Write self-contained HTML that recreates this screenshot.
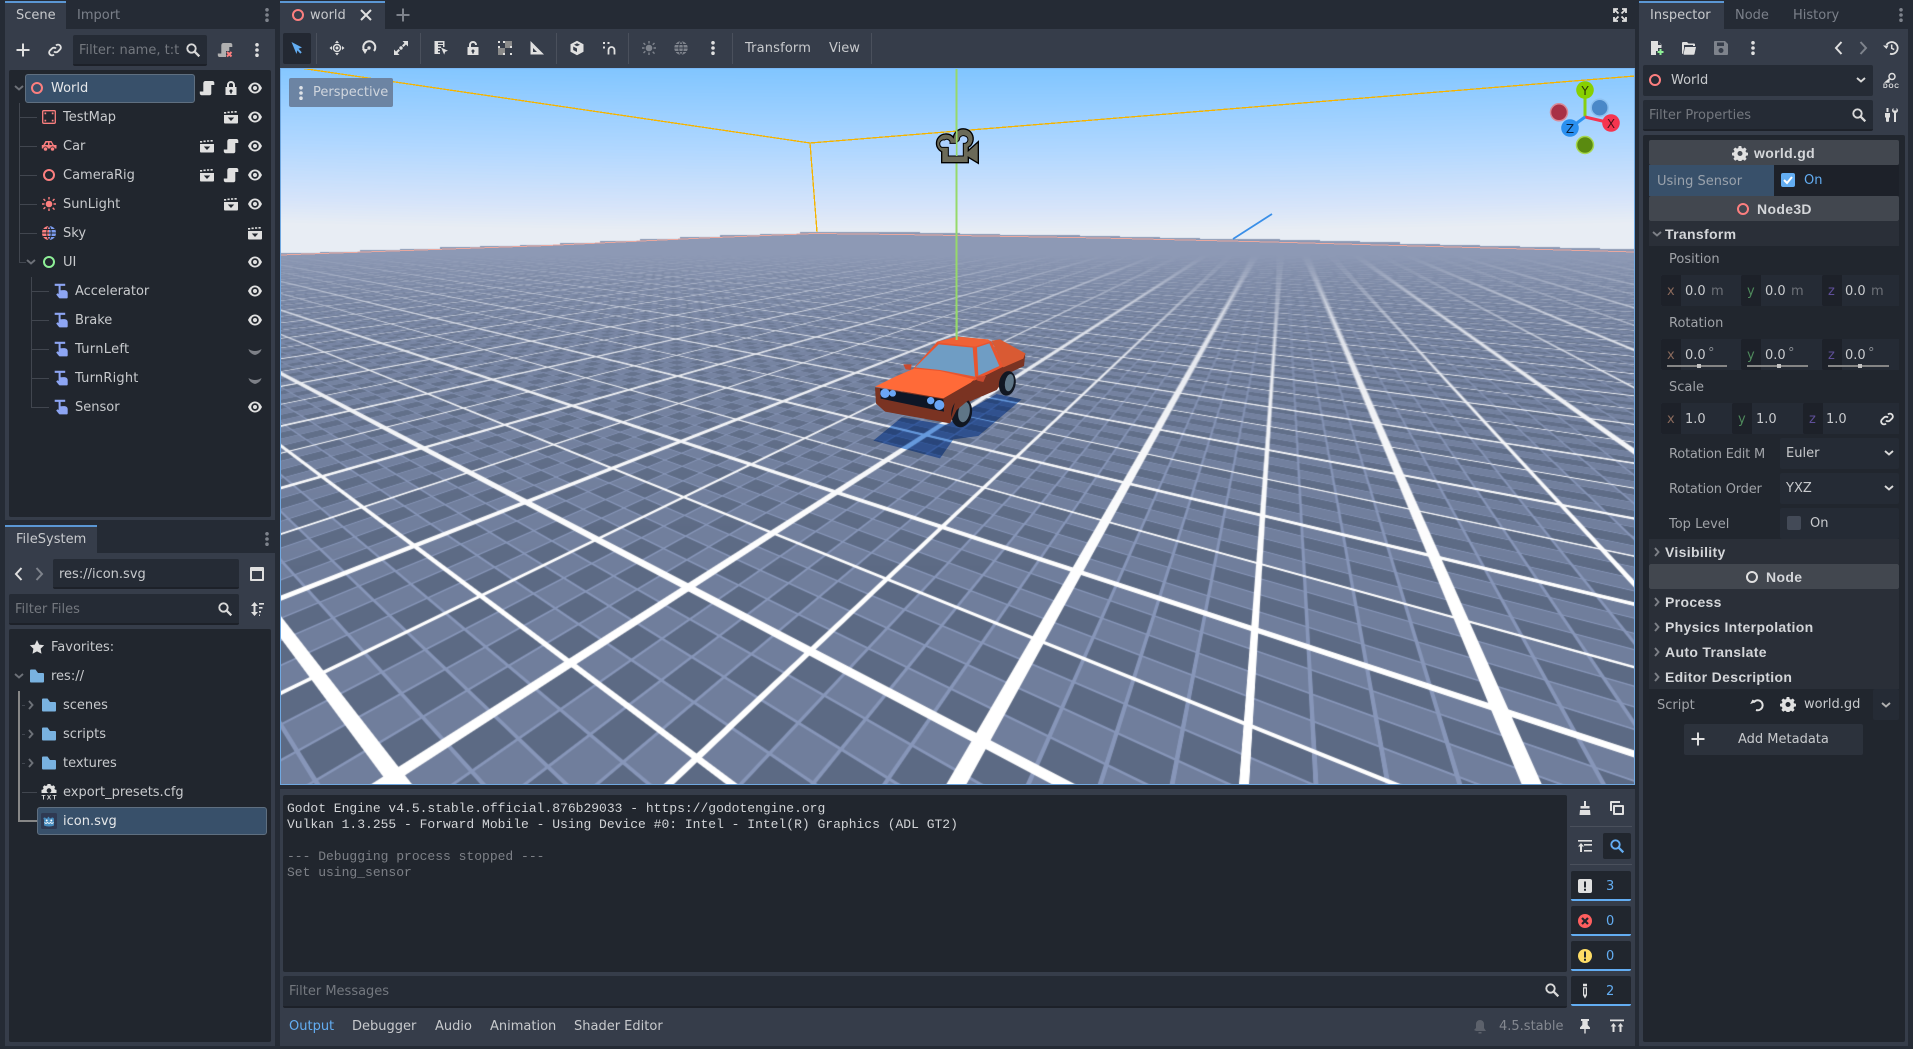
<!DOCTYPE html>
<html><head><meta charset="utf-8"><title>Godot Editor</title>
<style>
html,body{margin:0;padding:0;background:#252b35;width:1913px;height:1049px;overflow:hidden}
#r{position:relative;width:1913px;height:1049px;overflow:hidden;font-family:"DejaVu Sans","Liberation Sans",sans-serif;font-size:13px;color:#c8cacd}
.t{position:absolute;line-height:20px;white-space:nowrap;margin-top:1px}
.b{position:absolute}
.bd{font-family:"Liberation Sans",sans-serif;font-weight:700;font-size:14px;letter-spacing:.33px;color:#d4d6d9}
svg.i{position:absolute;width:16px;height:16px;overflow:visible}
.dim{color:#7b808a}.lab{color:#a0a3a8}.ph{color:#74787f}.blue{color:#63adf2}
.ln{position:absolute;background:#41464f}
.hd{position:absolute;left:1649px;width:250px;background:#42474f;border-radius:2px}
.sec{position:absolute;left:1649px;width:250px;background:#2a2f38}
.ax{position:absolute;width:20px;height:31px;background:#1d2129;border-radius:2px 0 0 2px}
.sl{position:absolute;height:2px;background:#858585}
.sh{position:absolute;width:4px;height:4px;background:#c4c4c4;top:364px}
.mono{font-family:"Liberation Mono",monospace;font-size:13px;line-height:16px;position:absolute;white-space:pre;left:287px}
.fb{position:absolute;left:1571px;width:60px;height:30px;background:#21262e;border-bottom:2px solid #63adf2;border-radius:2px;box-sizing:border-box}
.sep{position:absolute;width:1px;top:33px;height:31px;background:#4a505c}
</style></head><body><div id="r">
<svg width="0" height="0" style="position:absolute">
<defs>
<symbol id="eye" viewBox="0 0 16 16"><path fill-rule="evenodd" fill="#e0e0e0" d="M8 2.500C5 2.500 2.500 4.700 1 8c1.500 3.300 4 5.500 7 5.500s5.500-2.200 7-5.500c-1.500-3.300-4-5.500-7-5.500zm0 1.700a3.800 3.800 0 1 1 0 7.600 3.800 3.800 0 0 1 0-7.600zM8 6a2 2 0 1 0 0 4 2 2 0 0 0 0-4z"/></symbol>
<symbol id="eyeoff" viewBox="0 0 16 16"><path fill="#7d8087" d="M1.500 6c2 1.300 4 2 6.500 2s4.500-.7 6.500-2c-.6 3-3 5-6.500 6-3.500-1-5.900-3-6.500-6z"/></symbol>
<symbol id="clap" viewBox="0 0 16 16"><path fill="#e0e0e0" fill-rule="evenodd" d="M1 6h14v7.500a1 1 0 0 1-1 1H2a1 1 0 0 1-1-1zm3.800 2.500L8 12l3.200-3.500z"/><path fill="#e0e0e0" d="M1 3h2.200v1.600H1zM4.500 2.500h2.200v1.600H4.500zM8 2.200h2.200v1.600H8zM11.500 2h2.200v1.600h-2.200z"/></symbol>
<symbol id="scr" viewBox="0 0 16 16"><path fill="#e0e0e0" d="M6.500 1h7c1 0 1.800.8 1.800 1.800V5h-3v8.500c0 1-.8 1.700-1.700 1.700H2.500c-1 0-1.700-.9-1.700-1.900V11.500h3.500V3.300C4.300 2 5.300 1 6.500 1z"/></symbol>
<symbol id="lock" viewBox="0 0 16 16"><path fill="#e0e0e0" fill-rule="evenodd" d="M4 7V5a4 4 0 0 1 8 0v2h1.500v8h-11V7zm2 0h4V5a2 2 0 0 0-4 0zm2 2.500a1.500 1.500 0 0 0-.8 2.800V13.500h1.600v-1.200A1.500 1.500 0 0 0 8 9.500z"/></symbol>
<symbol id="unlock" viewBox="0 0 16 16"><path fill="#e0e0e0" fill-rule="evenodd" d="M4 7V5a4 4 0 0 1 8 0h-2a2 2 0 0 0-4 0v2h7.500v8h-11V7zm4 2.500a1.500 1.500 0 0 0-.8 2.800V13.500h1.600v-1.200A1.500 1.500 0 0 0 8 9.500z"/></symbol>
<symbol id="ring" viewBox="0 0 16 16"><circle cx="8" cy="8" r="5" fill="none" stroke="currentColor" stroke-width="2"/></symbol>
<symbol id="map" viewBox="0 0 16 16"><rect x="1.700" y="1.700" width="12.600" height="12.600" rx="1" fill="none" stroke="#fc7f7f" stroke-width="1.300"/><path fill="#fc7f7f" d="M3.500 3.500h1.700v1.700H3.500zM10.800 3.500h1.700v1.700h-1.700zM3.500 10.800h1.700v1.700H3.500zM10.800 10.800h1.700v1.700h-1.700z"/></symbol>
<symbol id="car" viewBox="0 0 16 16"><path fill="#fc7f7f" fill-rule="evenodd" d="M4.500 3h6l2.300 4H15.500v3.500H.8V7h1.500zm1 1.500L4 7h3V4.500zm3 0V7h2.800L10 4.500z"/><circle cx="4.500" cy="11" r="2.100" fill="#fc7f7f" stroke="#21262e" stroke-width=".7"/><circle cx="11.500" cy="11" r="2.100" fill="#fc7f7f" stroke="#21262e" stroke-width=".7"/></symbol>
<symbol id="sun" viewBox="0 0 16 16"><circle cx="8" cy="8" r="3.300" fill="currentColor"/><path fill="currentColor" d="M7.300 1h1.400v2.500H7.300zM7.300 12.500h1.400V15H7.300zM1 7.300h2.500v1.400H1zM12.500 7.300H15v1.400h-2.500zM3 2.500l1.800 1.800-1 1L2 3.500zM12.200 11.300l1.800 1.800-1 1-1.800-1.800zM2 12.500l1.800-1.800 1 1L3 13.500zM11.200 4.300L13 2.500l1 1-1.800 1.800z"/></symbol>
<symbol id="sky" viewBox="0 0 16 16"><path d="M8 1a7 7 0 0 0 0 14z" fill="#fc7f7f"/><path d="M8 1a7 7 0 0 1 0 14z" fill="#7c9cf0"/><path d="M1 8h14M8 1C5 4 5 12 8 15M8 1c3 3 3 11 0 14M2 4.500h12M2 11.500h12" stroke="#21262e" stroke-width=".9" fill="none"/></symbol>
<symbol id="globe" viewBox="0 0 16 16"><circle cx="8" cy="8" r="6.700" fill="currentColor"/><path d="M1 8h14M8 1C5 4 5 12 8 15M8 1c3 3 3 11 0 14M2 4.500h12M2 11.500h12" stroke="#363d4a" stroke-width=".9" fill="none"/></symbol>
<symbol id="ctl" viewBox="0 0 16 16"><path fill="#8da5f3" d="M1.700 .8h10.500v2.100H7.600v4.400h1.300c3-.4 5.800 0 5.800 3v3.800a1.300 1.300 0 0 1-1.300 1.300H7a1.500 1.500 0 0 1-1.200-.6L3.200 11.500l1.300-1.200 1.100.7V2.900H1.700z"/></symbol>
<symbol id="mag" viewBox="0 0 16 16"><circle cx="6.500" cy="6.500" r="4.200" fill="none" stroke="currentColor" stroke-width="1.900"/><path d="M9.700 9.700l4.600 4.600" stroke="currentColor" stroke-width="2.300" fill="none"/></symbol>
<symbol id="dots" viewBox="0 0 16 16"><circle cx="8" cy="2.800" r="1.800" fill="currentColor"/><circle cx="8" cy="8" r="1.800" fill="currentColor"/><circle cx="8" cy="13.200" r="1.800" fill="currentColor"/></symbol>
<symbol id="chd" viewBox="0 0 16 16"><path d="M4 6l4 3.500L12 6" fill="none" stroke="currentColor" stroke-width="1.900"/></symbol>
<symbol id="chr" viewBox="0 0 16 16"><path d="M6 4l3.500 4L6 12" fill="none" stroke="currentColor" stroke-width="1.900"/></symbol>
<symbol id="bl" viewBox="0 0 16 16"><path d="M10.500 2L5 8l5.500 6" fill="none" stroke="currentColor" stroke-width="2"/></symbol>
<symbol id="br" viewBox="0 0 16 16"><path d="M5.500 2L11 8l-5.500 6" fill="none" stroke="currentColor" stroke-width="2"/></symbol>
<symbol id="plus" viewBox="0 0 16 16"><path d="M8 1.500v13M1.500 8h13" stroke="currentColor" stroke-width="2" fill="none"/></symbol>
<symbol id="link" viewBox="0 0 16 16"><path d="M9 3.500a2.800 2.800 0 0 1 4 4l-2 2a2.800 2.800 0 0 1-4 0M7 12.500a2.800 2.800 0 0 1-4-4l2-2a2.800 2.800 0 0 1 4 0" fill="none" stroke="currentColor" stroke-width="1.900"/></symbol>
<symbol id="scrx" viewBox="0 0 16 16"><path fill="#b0b0b0" d="M6.500 1h7c1 0 1.800.8 1.800 1.800V5h-3v4H9v6H2.500c-1 0-1.700-.9-1.700-1.900V11.500h3.500V3.300C4.300 2 5.300 1 6.500 1z"/><path d="M10 10l4.500 4.500M14.500 10L10 14.500" stroke="#fc7f7f" stroke-width="2" fill="none"/></symbol>
<symbol id="folder" viewBox="0 0 16 16"><path fill="#79b2e0" d="M1 2.500a1 1 0 0 1 1-1h4.500L9 5h5a1 1 0 0 1 1 1v7.500a1 1 0 0 1-1 1H2a1 1 0 0 1-1-1z"/></symbol>
<symbol id="star" viewBox="0 0 16 16"><path fill="#e0e0e0" d="M8 1l2.200 4.600 5 .7-3.600 3.500.9 5L8 12.400l-4.500 2.400.9-5L.8 6.300l5-.7z"/></symbol>
<symbol id="gear" viewBox="0 0 16 16"><path fill="#e0e0e0" fill-rule="evenodd" d="M6.700 1h2.600l.4 2 1.300.6 1.800-1.100 1.800 1.800-1.100 1.800.6 1.300 1.900.4v2.600l-1.900.4-.6 1.300 1.100 1.800-1.800 1.800-1.800-1.100-1.300.6-.4 1.900H6.700l-.4-1.900-1.300-.6-1.800 1.100-1.800-1.800 1.100-1.800-.6-1.300-1.900-.4V7.800l1.900-.4.6-1.300-1.100-1.800 1.800-1.800 1.800 1.100 1.300-.6zM8 6a2.500 2.500 0 1 0 0 5 2.500 2.500 0 0 0 0-5z"/></symbol>
<symbol id="cfg" viewBox="0 0 16 16"><path fill="#e0e0e0" d="M6.500 0h3l.3 1.400 1.400.6 1.200-.8 1.800 1.800-.8 1.300.5 1.200 1.600.4V9H.5V5.900L2 5.500l.6-1.200-.8-1.300L3.600 1.200l1.200.8 1.400-.6zM8 4.300A2.300 2.300 0 1 0 8 9a2.300 2.300 0 0 0 0-4.700z" fill-rule="evenodd"/><text x="8" y="15.500" font-family="Liberation Sans" font-weight="700" font-size="6.500" text-anchor="middle" fill="#e0e0e0" textLength="15">TXT</text></symbol>
<symbol id="godot" viewBox="0 0 16 16"><rect width="16" height="16" rx="1.500" fill="#2f3952"/><path fill="#478cbf" d="M3 7l-.7-2 1.700-.6 1 1h1.500l.4-1.500h1.200l.4 1.500h1.500l1-1 1.700.6L13 7v5.500c-3 1.300-7 1.300-10 0z"/><path d="M3.500 9.500l1.500 1 1.500-1 1.500 1 1.500-1 1.500 1 1.500-1" stroke="#fff" stroke-width=".9" fill="none"/><circle cx="5.700" cy="7.500" r="1" fill="#fff"/><circle cx="10.300" cy="7.500" r="1" fill="#fff"/></symbol>
<symbol id="file" viewBox="0 0 16 16"><path fill="#e0e0e0" d="M2 1h7l3.500 3.500V8H9v3H7v4H2zM9 1v4h3.500z"/><path d="M11.500 9v6M8.500 12h6" stroke="#8eef97" stroke-width="2"/></symbol>
<symbol id="open" viewBox="0 0 16 16"><path fill="#e0e0e0" fill-rule="evenodd" d="M1 3a1 1 0 0 1 1-1h4l1.500 1.500H13a1 1 0 0 1 1 1V6h-2V5H3v3.500L2 14a1 1 0 0 1-1-1z"/><path fill="#e0e0e0" d="M4 7h11l-1.500 7a1 1 0 0 1-1 .7H3l-.5-.5z"/></symbol>
<symbol id="save" viewBox="0 0 16 16"><path fill-rule="evenodd" d="M2 1h10l3 3v10a1 1 0 0 1-1 1H2a1 1 0 0 1-1-1V2a1 1 0 0 1 1-1zm2 1.500V6h7V2.500zM8 8a2.500 2.500 0 1 0 0 5 2.500 2.500 0 0 0 0-5z" fill="currentColor"/></symbol>
<symbol id="hist" viewBox="0 0 16 16"><path d="M3.500 5A6 6 0 1 1 7 13.800" fill="none" stroke="#e0e0e0" stroke-width="1.800"/><path d="M0 5.500h5.500L3.500 9z" fill="#e0e0e0"/><path d="M8.700 4.500v3.800l2.500 1.300" fill="none" stroke="#e0e0e0" stroke-width="1.500"/></symbol>
<symbol id="doc" viewBox="0 0 16 16"><circle cx="9" cy="4.500" r="3" fill="none" stroke="#e0e0e0" stroke-width="1.500"/><path d="M6.800 6.700L3 10h3.500" stroke="#e0e0e0" stroke-width="1.600" fill="#e0e0e0"/><text x="8" y="15.800" font-family="Liberation Sans" font-weight="700" font-size="6.500" text-anchor="middle" fill="#e0e0e0" textLength="16">DOC</text></symbol>
<symbol id="tools" viewBox="0 0 16 16"><path fill="#e0e0e0" d="M2 6h5v4l-1 1v3.500L4.500 15 3 14.500V11L2 10zM3.500 1h2v4h-2zM10.500 1c-1 .5-1.500 1.500-1.500 2.500S10 5.500 11 6v9h2V6c1-.5 2-1.500 2-2.500S14.500 1.500 13.500 1v2.500h-3z"/></symbol>
<symbol id="sort" viewBox="0 0 16 16"><path fill="#e0e0e0" d="M5.500 1L9 5H6.500v6H9l-3.500 4L2 11h2.500V5H2zM10 2h5v1.600h-5zM10 6h3.500v1.600H10zM10 10h2v1.600h-2zM10 13.500h1v1.500h-1z"/></symbol>
<symbol id="win" viewBox="0 0 16 16"><path fill="#e0e0e0" fill-rule="evenodd" d="M2 1h12a1 1 0 0 1 1 1v12a1 1 0 0 1-1 1H2a1 1 0 0 1-1-1V2a1 1 0 0 1 1-1zm1 4v8h10V5z"/></symbol>
<symbol id="reload" viewBox="0 0 16 16"><path d="M4.500 5.500A5 5 0 1 1 7 13" fill="none" stroke="#e0e0e0" stroke-width="2"/><path d="M.5 6h6.500L4.500 2.500z" fill="#e0e0e0" transform="rotate(-20 4 5)"/></symbol>
<symbol id="full" viewBox="0 0 16 16"><path d="M2 6V2h4M10 2h4v4M14 10v4h-4M6 14H2v-4M3 3l3.500 3.500M13 3L9.500 6.500M13 13L9.500 9.500M3 13l3.500-3.500" fill="none" stroke="#e0e0e0" stroke-width="1.800"/></symbol>
<symbol id="clean" viewBox="0 0 16 16"><path fill="#e0e0e0" d="M7 1h2v5h3.500v2.500h-9V6H7zM3 10h10l.5 5H2.500z"/></symbol>
<symbol id="copy" viewBox="0 0 16 16"><path fill="#e0e0e0" fill-rule="evenodd" d="M2 1h9v2H3v8H1V2a1 1 0 0 1 1-1zm3 4h9a1 1 0 0 1 1 1v8a1 1 0 0 1-1 1H5a1 1 0 0 1-1-1V6a1 1 0 0 1 1-1zm1 2v6h7V7z"/></symbol>
<symbol id="lines" viewBox="0 0 16 16"><path fill="#e0e0e0" d="M1 2h14v1.600H1zM7 6h8v1.600H7zM7 12h8v1.600H7zM4 5l3 3.500H5V14H3V8.500H1z"/></symbol>
<symbol id="msg" viewBox="0 0 16 16"><rect x="1" y="1" width="14" height="14" rx="2" fill="#e0e0e0"/><path d="M7 3.500h2v6H7zM7 10.800h2v2H7z" fill="#21262e"/></symbol>
<symbol id="err" viewBox="0 0 16 16"><circle cx="8" cy="8" r="7" fill="#ff5f5f"/><path d="M5 5l6 6M11 5l-6 6" stroke="#21262e" stroke-width="2.200"/></symbol>
<symbol id="warn" viewBox="0 0 16 16"><circle cx="8" cy="8" r="7" fill="#ffdd65"/><path d="M7 3.500h2v6H7zM7 10.800h2v2H7z" fill="#21262e"/></symbol>
<symbol id="pen" viewBox="0 0 16 16"><path fill="#e0e0e0" fill-rule="evenodd" d="M6 .8h4v2.500H6zM6 4.200h4v8L8 15.500 6 12.200zM7.200 5.500v6h1.600v-6z"/></symbol>
<symbol id="pin" viewBox="0 0 16 16"><path fill="#e0e0e0" d="M4 1h8v2h-1.300v4L13 9.500V11H3V9.500L5.300 7V3H4zM7.300 11h1.400v4.500H7.300z"/></symbol>
<symbol id="ups" viewBox="0 0 16 16"><path fill="#e0e0e0" d="M1 1.500h14v1.800H1zM4.500 5L7.300 8.500H5.500V14h-2V8.500H1.700zM11.500 5l2.800 3.500h-1.800V14h-2V8.500H8.700z"/></symbol>
<symbol id="arrow" viewBox="0 0 16 16"><path d="M2.500 2L13 7.500 8.700 9l-1.200 5z" fill="currentColor"/><path d="M8.500 9l3.500 4" stroke="currentColor" stroke-width="2"/></symbol>
<symbol id="move" viewBox="0 0 16 16"><path fill="#e0e0e0" d="M8 .5L10 3H6zM8 15.500L6 13h4zM.5 8L3 6v4zM15.500 8L13 10V6z"/><circle cx="8" cy="8" r="3.500" fill="none" stroke="#e0e0e0" stroke-width="1.500"/><circle cx="8" cy="8" r="1.500" fill="#e0e0e0"/></symbol>
<symbol id="rot" viewBox="0 0 16 16"><path d="M4 11.500A6 6 0 1 1 13 11" fill="none" stroke="#e0e0e0" stroke-width="2"/><path d="M1 9h6l-3 5z" fill="#e0e0e0"/><circle cx="8" cy="8" r="1.700" fill="#e0e0e0"/></symbol>
<symbol id="scl" viewBox="0 0 16 16"><path fill="#e0e0e0" d="M9.500 1H15v5.500l-2-2-2.500 2.500L9 5.500 11.500 3zM6.500 15H1V9.500l2 2L5.500 9 7 10.500 4.500 13z"/><circle cx="8" cy="8" r="1.700" fill="#e0e0e0"/></symbol>
<symbol id="lst" viewBox="0 0 16 16"><path fill="#e0e0e0" fill-rule="evenodd" d="M1.500 1h10v6H10V5H5v1.500h3V8H5v1.500h2V11H5v1.500h2V14H1.500zM5 2.500V4h5V2.500z"/><path d="M8 7.500l7 3.300-2.800 1-1 2.800z" fill="#e0e0e0"/></symbol>
<symbol id="grid" viewBox="0 0 16 16"><path fill="#8a8a8a" d="M1 8h7v7H1zM8 1h7v7H8z"/><path fill="#e0e0e0" d="M1 1h2v2H1zM6 1h2v2H6zM13 6h2v2h-2zM13 13h2v2h-2zM6 13h2v2H6zM1 6h2v2H1z"/></symbol>
<symbol id="rul" viewBox="0 0 16 16"><path fill="#e0e0e0" fill-rule="evenodd" d="M1.500 1L15 14.500H1.500zM4 8v4h4z"/></symbol>
<symbol id="cube" viewBox="0 0 16 16"><path fill="#e0e0e0" fill-rule="evenodd" d="M8 .8l6.500 3.400v7.600L8 15.200l-6.500-3.400V4.200zM8 8.500l-3.800-2V10L8 12zM8 3.300L5 4.800 8 6.300l3-1.500z"/></symbol>
<symbol id="mgn" viewBox="0 0 16 16"><path d="M7.500 14.500V10a3 3 0 0 1 6 0v4.500" fill="none" stroke="#e0e0e0" stroke-width="1.800"/><path fill="#e0e0e0" d="M2 2h2v2H2zM2 6.500h2v2H2zM6.500 2h2v2h-2z"/></symbol>
</defs></svg>

<!-- LEFT TOP DOCK -->
<div class="b" style="left:5px;top:0;width:270px;height:29px;background:#252b35"></div>
<div class="b" style="left:5px;top:1px;width:61px;height:28px;background:#363d4a;border-top:2px solid #5b97d4;box-sizing:border-box"></div>
<div class="t" style="left:16px;top:5px">Scene</div>
<div class="t dim" style="left:77px;top:5px">Import</div>
<svg class="i" style="left:259px;top:7px;color:#7e838c"><use href="#dots"/></svg>
<div class="b" style="left:5px;top:29px;width:270px;height:491px;background:#363d4a"></div>
<svg class="i" style="left:15px;top:42px;color:#e0e0e0"><use href="#plus"/></svg>
<svg class="i" style="left:47px;top:42px;color:#e0e0e0"><use href="#link"/></svg>
<div class="b" style="left:73px;top:35px;width:134px;height:31px;background:#252b35;border-bottom:2px solid #1d2129;box-sizing:border-box;border-radius:2px"></div>
<div class="t ph" style="left:79px;top:40px">Filter: name, t:t</div>
<svg class="i" style="left:185px;top:42px;color:#d8d8d8"><use href="#mag"/></svg>
<svg class="i" style="left:217px;top:42px"><use href="#scrx"/></svg>
<svg class="i" style="left:249px;top:42px;color:#e0e0e0"><use href="#dots"/></svg>
<div class="b" style="left:9px;top:70px;width:262px;height:447px;background:#21262e;border-radius:2px"></div>
<div class="b" style="left:25px;top:74px;width:170px;height:29px;background:#38506a;border:1px solid #5f6f80;box-sizing:border-box;border-radius:3px"></div>
<!-- tree lines -->
<div class="ln" style="left:19px;top:103px;width:1px;height:160px"></div>
<div class="ln" style="left:20px;top:117px;width:17px;height:1px"></div>
<div class="ln" style="left:20px;top:146px;width:17px;height:1px"></div>
<div class="ln" style="left:20px;top:175px;width:17px;height:1px"></div>
<div class="ln" style="left:20px;top:204px;width:17px;height:1px"></div>
<div class="ln" style="left:20px;top:233px;width:17px;height:1px"></div>
<div class="ln" style="left:20px;top:262px;width:6px;height:1px"></div>
<div class="ln" style="left:31px;top:277px;width:1px;height:131px"></div>
<div class="ln" style="left:32px;top:291px;width:17px;height:1px"></div>
<div class="ln" style="left:32px;top:320px;width:17px;height:1px"></div>
<div class="ln" style="left:32px;top:349px;width:17px;height:1px"></div>
<div class="ln" style="left:32px;top:378px;width:17px;height:1px"></div>
<div class="ln" style="left:32px;top:407px;width:17px;height:1px"></div>
<svg class="i" style="left:11px;top:80px;color:#6d7178"><use href="#chd"/></svg>
<svg class="i" style="left:23px;top:254px;color:#6d7178"><use href="#chd"/></svg>
<svg class="i" style="left:29px;top:80px;color:#fc7f7f"><use href="#ring"/></svg>
<div class="t" style="left:51px;top:78px;color:#e6e8ea">World</div>
<svg class="i" style="left:199px;top:80px"><use href="#scr"/></svg>
<svg class="i" style="left:223px;top:80px"><use href="#lock"/></svg>
<svg class="i" style="left:247px;top:80px"><use href="#eye"/></svg>
<svg class="i" style="left:41px;top:109px"><use href="#map"/></svg>
<div class="t" style="left:63px;top:107px">TestMap</div>
<svg class="i" style="left:223px;top:109px"><use href="#clap"/></svg>
<svg class="i" style="left:247px;top:109px"><use href="#eye"/></svg>
<svg class="i" style="left:41px;top:138px"><use href="#car"/></svg>
<div class="t" style="left:63px;top:136px">Car</div>
<svg class="i" style="left:199px;top:138px"><use href="#clap"/></svg>
<svg class="i" style="left:223px;top:138px"><use href="#scr"/></svg>
<svg class="i" style="left:247px;top:138px"><use href="#eye"/></svg>
<svg class="i" style="left:41px;top:167px;color:#fc7f7f"><use href="#ring"/></svg>
<div class="t" style="left:63px;top:165px">CameraRig</div>
<svg class="i" style="left:199px;top:167px"><use href="#clap"/></svg>
<svg class="i" style="left:223px;top:167px"><use href="#scr"/></svg>
<svg class="i" style="left:247px;top:167px"><use href="#eye"/></svg>
<svg class="i" style="left:41px;top:196px;color:#fc7f7f"><use href="#sun"/></svg>
<div class="t" style="left:63px;top:194px">SunLight</div>
<svg class="i" style="left:223px;top:196px"><use href="#clap"/></svg>
<svg class="i" style="left:247px;top:196px"><use href="#eye"/></svg>
<svg class="i" style="left:41px;top:225px"><use href="#sky"/></svg>
<div class="t" style="left:63px;top:223px">Sky</div>
<svg class="i" style="left:247px;top:225px"><use href="#clap"/></svg>
<svg class="i" style="left:41px;top:254px;color:#8eef97"><use href="#ring"/></svg>
<div class="t" style="left:63px;top:252px">UI</div>
<svg class="i" style="left:247px;top:254px"><use href="#eye"/></svg>
<svg class="i" style="left:53px;top:283px"><use href="#ctl"/></svg>
<div class="t" style="left:75px;top:281px">Accelerator</div>
<svg class="i" style="left:247px;top:283px"><use href="#eye"/></svg>
<svg class="i" style="left:53px;top:312px"><use href="#ctl"/></svg>
<div class="t" style="left:75px;top:310px">Brake</div>
<svg class="i" style="left:247px;top:312px"><use href="#eye"/></svg>
<svg class="i" style="left:53px;top:341px"><use href="#ctl"/></svg>
<div class="t" style="left:75px;top:339px;letter-spacing:.3px">TurnLeft</div>
<svg class="i" style="left:247px;top:343px"><use href="#eyeoff"/></svg>
<svg class="i" style="left:53px;top:370px"><use href="#ctl"/></svg>
<div class="t" style="left:75px;top:368px;letter-spacing:.2px">TurnRight</div>
<svg class="i" style="left:247px;top:372px"><use href="#eyeoff"/></svg>
<svg class="i" style="left:53px;top:399px"><use href="#ctl"/></svg>
<div class="t" style="left:75px;top:397px">Sensor</div>
<svg class="i" style="left:247px;top:399px"><use href="#eye"/></svg>

<!-- FILESYSTEM -->
<div class="b" style="left:5px;top:525px;width:270px;height:28px;background:#252b35"></div>
<div class="b" style="left:5px;top:525px;width:92px;height:28px;background:#363d4a;border-top:2px solid #5b97d4;box-sizing:border-box"></div>
<div class="t" style="left:16px;top:529px">FileSystem</div>
<svg class="i" style="left:259px;top:531px;color:#7e838c"><use href="#dots"/></svg>
<div class="b" style="left:5px;top:553px;width:270px;height:493px;background:#363d4a"></div>
<svg class="i" style="left:11px;top:566px;color:#e0e0e0"><use href="#bl"/></svg>
<svg class="i" style="left:31px;top:566px;color:#7e838c"><use href="#br"/></svg>
<div class="b" style="left:53px;top:559px;width:186px;height:30px;background:#252b35;border-bottom:2px solid #1d2129;box-sizing:border-box;border-radius:2px"></div>
<div class="t" style="left:59px;top:564px">res://icon.svg</div>
<svg class="i" style="left:249px;top:566px"><use href="#win"/></svg>
<div class="b" style="left:9px;top:594px;width:230px;height:31px;background:#252b35;border-bottom:2px solid #1d2129;box-sizing:border-box;border-radius:2px"></div>
<div class="t ph" style="left:15px;top:599px">Filter Files</div>
<svg class="i" style="left:217px;top:601px;color:#d8d8d8"><use href="#mag"/></svg>
<svg class="i" style="left:249px;top:601px"><use href="#sort"/></svg>
<div class="b" style="left:9px;top:629px;width:262px;height:413px;background:#21262e;border-radius:2px"></div>
<svg class="i" style="left:29px;top:639px"><use href="#star"/></svg>
<div class="t" style="left:51px;top:637px">Favorites:</div>
<svg class="i" style="left:11px;top:668px;color:#6d7178"><use href="#chd"/></svg>
<svg class="i" style="left:29px;top:668px"><use href="#folder"/></svg>
<div class="t" style="left:51px;top:666px">res://</div>
<div class="b" style="left:18px;top:691px;width:2px;height:131px;background:#878787"></div>
<div class="b" style="left:18px;top:820px;width:19px;height:2px;background:#878787"></div>
<div class="ln" style="left:22px;top:705px;width:3px;height:1px"></div>
<div class="ln" style="left:22px;top:734px;width:3px;height:1px"></div>
<div class="ln" style="left:22px;top:763px;width:3px;height:1px"></div>
<div class="ln" style="left:22px;top:792px;width:15px;height:1px"></div>
<svg class="i" style="left:23px;top:697px;color:#6d7178"><use href="#chr"/></svg>
<svg class="i" style="left:23px;top:726px;color:#6d7178"><use href="#chr"/></svg>
<svg class="i" style="left:23px;top:755px;color:#6d7178"><use href="#chr"/></svg>
<svg class="i" style="left:41px;top:697px"><use href="#folder"/></svg>
<div class="t" style="left:63px;top:695px">scenes</div>
<svg class="i" style="left:41px;top:726px"><use href="#folder"/></svg>
<div class="t" style="left:63px;top:724px">scripts</div>
<svg class="i" style="left:41px;top:755px"><use href="#folder"/></svg>
<div class="t" style="left:63px;top:753px">textures</div>
<svg class="i" style="left:41px;top:784px"><use href="#cfg"/></svg>
<div class="t" style="left:63px;top:782px">export_presets.cfg</div>
<div class="b" style="left:37px;top:807px;width:230px;height:28px;background:#38506a;border:1px solid #5f6f80;box-sizing:border-box;border-radius:3px"></div>
<svg class="i" style="left:41px;top:813px"><use href="#godot"/></svg>
<div class="t" style="left:63px;top:811px;color:#e6e8ea">icon.svg</div>

<!-- CENTER TOP -->
<div class="b" style="left:280px;top:0;width:1355px;height:29px;background:#252b35"></div>
<div class="b" style="left:280px;top:1px;width:105px;height:28px;background:#363d4a;border-top:2px solid #5b97d4;box-sizing:border-box"></div>
<svg class="i" style="left:290px;top:7px;color:#fc7f7f"><use href="#ring"/></svg>
<div class="t" style="left:310px;top:5px">world</div>
<svg class="i" style="left:358px;top:7px"><path d="M3 3l10 10M13 3L3 13" stroke="#e0e0e0" stroke-width="2" fill="none"/></svg>
<svg class="i" style="left:395px;top:7px;color:#7e838c"><use href="#plus"/></svg>
<svg class="i" style="left:1612px;top:7px"><use href="#full"/></svg>
<div class="b" style="left:280px;top:29px;width:1355px;height:39px;background:#363d4a"></div>
<div class="b" style="left:283px;top:33px;width:28px;height:31px;background:#232832;border-radius:2px"></div>
<svg class="i" style="left:289px;top:40px;color:#63adf2"><use href="#arrow"/></svg>
<div class="sep" style="left:316px"></div><div class="sep" style="left:420px"></div><div class="sep" style="left:556px"></div><div class="sep" style="left:628px"></div><div class="sep" style="left:732px"></div><div class="sep" style="left:871px"></div>
<svg class="i" style="left:329px;top:40px"><use href="#move"/></svg>
<svg class="i" style="left:361px;top:40px"><use href="#rot"/></svg>
<svg class="i" style="left:393px;top:40px"><use href="#scl"/></svg>
<svg class="i" style="left:433px;top:40px"><use href="#lst"/></svg>
<svg class="i" style="left:465px;top:40px"><use href="#unlock"/></svg>
<svg class="i" style="left:497px;top:40px"><use href="#grid"/></svg>
<svg class="i" style="left:529px;top:40px"><use href="#rul"/></svg>
<svg class="i" style="left:569px;top:40px"><use href="#cube"/></svg>
<svg class="i" style="left:601px;top:40px"><use href="#mgn"/></svg>
<svg class="i" style="left:641px;top:40px;color:#7e838c"><use href="#sun"/></svg>
<svg class="i" style="left:673px;top:40px;color:#7e838c"><use href="#globe"/></svg>
<svg class="i" style="left:705px;top:40px;color:#e0e0e0"><use href="#dots"/></svg>
<div class="t" style="left:745px;top:38px;letter-spacing:.15px">Transform</div>
<div class="t" style="left:829px;top:38px">View</div>

<!-- VIEWPORT -->
<div class="b" style="left:280px;top:68px;width:1355px;height:717px;background:#7080a0;overflow:hidden">
<canvas id="vp" width="1355" height="717" style="position:absolute;left:0;top:0"></canvas>
<svg style="position:absolute;left:560px;top:242px;width:220px;height:160px;mix-blend-mode:multiply" viewBox="0 0 660 480"><polygon fill="#6aa0e4" points="100,392 185,322 320,345 385,300 470,252 545,268 415,378 340,388 300,445"/></svg>
<svg style="position:absolute;left:0;top:0;width:1355px;height:717px" viewBox="280 68 1355 717">
<polyline fill="none" stroke="#e8a8a0" stroke-width="1" shape-rendering="crispEdges" points="280,255 548,245.500 704,238 815,233.500 900,234.500 1100,238 1270,242 1635,252"/>
<polyline fill="none" stroke="#f5b400" stroke-width="1.300" shape-rendering="crispEdges" points="300,68 810,143 1635,76"/>
<line x1="810" y1="143" x2="817" y2="232" stroke="#f5b400" stroke-width="1.300" shape-rendering="crispEdges"/>
<line x1="1233" y1="239" x2="1272" y2="214" stroke="#3a8fe8" stroke-width="1.800"/>
<line x1="956.500" y1="68" x2="956.500" y2="340" stroke="#96d96a" stroke-width="2"/>
<g transform="translate(930,120) scale(.3333) translate(-90,-180)">
<path d="M125 305 V275 A28 28 0 0 1 135 222 A28 28 0 0 1 160 232 A30 30 0 0 1 216 222 A30 30 0 0 1 205 262 V272 L235 245 V310 L205 292 V308 H125z" fill="#6b6a58" stroke="#000" stroke-width="4"/>
<path d="M145 288 V262 L125 262 A12 12 0 0 1 134 240 A10 10 0 0 1 150 250 L168 250 L178 240 A12 12 0 0 1 195 228 A10 10 0 0 1 190 250 V288z" fill="#acd0fe" stroke="#000" stroke-width="3"/>
<line x1="170" y1="200" x2="170" y2="288" stroke="#96d96a" stroke-width="5"/>
</g>
<circle cx="1559" cy="112.300" r="8.500" fill="#a83146" stroke="#d98a98" stroke-width="1.500"/>
<circle cx="1599.700" cy="107.700" r="8.500" fill="#4a88c8" stroke="#8cc0f0" stroke-width="1.500"/>
<circle cx="1585" cy="145" r="8.500" fill="#5a8a10" stroke="#a6d850" stroke-width="1.500"/>
<line x1="1585" y1="117" x2="1585" y2="90" stroke="#88cf10" stroke-width="3"/>
<line x1="1585" y1="117" x2="1611" y2="123" stroke="#f5344f" stroke-width="3"/>
<line x1="1585" y1="117" x2="1570" y2="128" stroke="#2a90f0" stroke-width="3"/>
<circle cx="1585" cy="90" r="8.800" fill="#88d000"/>
<circle cx="1611" cy="123" r="8.800" fill="#f5344f"/>
<circle cx="1570" cy="128" r="8.800" fill="#2a90f0"/>
<text x="1585" y="95" font-family="DejaVu Sans" font-size="12" text-anchor="middle" fill="#27330a">Y</text>
<text x="1611" y="128" font-family="DejaVu Sans" font-size="12" text-anchor="middle" fill="#4a0f18">X</text>
<text x="1570" y="133" font-family="DejaVu Sans" font-size="12" text-anchor="middle" fill="#08223f">Z</text>
</svg>
<svg style="position:absolute;left:560px;top:242px;width:220px;height:160px" viewBox="0 0 660 480">
<polygon fill="#7a3322" points="105,232 108,280 135,305 330,340 345,300 395,272 470,240 505,190 552,168 556,130 400,210 310,262"/>
<polygon fill="#d95a33" points="455,92 480,88 556,130 550,146 490,172"/>
<polygon fill="#e8552f" points="218,178 292,95 352,80 445,90 455,95 490,170 415,207 402,212 300,185"/>
<polygon fill="#f06236" points="292,97 350,80 445,88 450,95 405,110"/>
<polygon fill="#6f9dc4" points="226,172 296,103 398,113 405,200 300,180"/>
<polygon fill="#6f9dc4" points="411,112 448,100 478,168 415,197"/>
<polygon fill="#ff6a38" points="105,230 170,198 222,176 300,183 403,208 392,218 310,265"/>
<polygon fill="#0e1626" points="120,236 310,268 312,305 122,266"/>
<polygon fill="#c94a30" points="190,163 215,163 212,180 197,178"/>
<polygon fill="#c94a30" points="408,200 438,198 430,216 412,212"/>
<circle cx="135" cy="250" r="14" fill="#6aa5f5"/><circle cx="158" cy="250" r="10" fill="#6aa5f5"/><circle cx="272" cy="272" r="11" fill="#6aa5f5"/><circle cx="298" cy="285" r="15" fill="#6aa5f5"/>
<ellipse cx="502" cy="220" rx="25" ry="37" fill="#111722" transform="rotate(10 502 220)"/>
<ellipse cx="508" cy="218" rx="13" ry="26" fill="#5f7687" transform="rotate(10 508 218)"/>
<ellipse cx="365" cy="308" rx="31" ry="44" fill="#111722" transform="rotate(10 365 308)"/>
<ellipse cx="372" cy="306" rx="17" ry="31" fill="#5f7687" transform="rotate(10 372 306)"/>
<polygon fill="#7a3322" points="330,340 345,275 395,240 392,265 350,300"/>
<line x1="350" y1="0" x2="350" y2="90" stroke="#96d96a" stroke-width="6"/>
</svg>
<div class="b" style="left:9px;top:10px;width:104px;height:29px;background:#6c84a3;border-radius:2px"></div>
<svg class="i" style="left:13px;top:17px;color:#dfe3e8"><use href="#dots"/></svg>
<div class="t" style="left:33px;top:14px;color:#cfd5dd">Perspective</div>
<div class="b" style="left:0;top:0;width:1355px;height:717px;box-sizing:border-box;border:1px solid #70a8e0;border-top-color:#7ab8f5"></div>
</div>

<!-- BOTTOM PANEL -->
<div class="b" style="left:280px;top:789px;width:1355px;height:257px;background:#363d4a"></div>
<div class="b" style="left:283px;top:795px;width:1284px;height:177px;background:#21262e;border-radius:2px"></div>
<div class="mono" style="top:801px;color:#d2d4d7">Godot Engine v4.5.stable.official.876b29033 - https://godotengine.org</div>
<div class="mono" style="top:817px;color:#d2d4d7">Vulkan 1.3.255 - Forward Mobile - Using Device #0: Intel - Intel(R) Graphics (ADL GT2)</div>
<div class="mono" style="top:849px;color:#7d8087">--- Debugging process stopped ---</div>
<div class="mono" style="top:865px;color:#7d8087">Set using_sensor</div>
<div class="b" style="left:283px;top:976px;width:1284px;height:32px;background:#252b35;border-bottom:2px solid #1d2129;box-sizing:border-box;border-radius:2px"></div>
<div class="t ph" style="left:289px;top:981px">Filter Messages</div>
<svg class="i" style="left:1544px;top:982px;color:#d8d8d8"><use href="#mag"/></svg>
<div class="t blue" style="left:289px;top:1016px">Output</div>
<div class="t" style="left:352px;top:1016px">Debugger</div>
<div class="t" style="left:435px;top:1016px">Audio</div>
<div class="t" style="left:490px;top:1016px">Animation</div>
<div class="t" style="left:574px;top:1016px">Shader Editor</div>
<svg class="i" style="left:1472px;top:1018px"><path d="M8 2a4 4 0 0 1 4 4v4l2 3H4l-2-1 2-2V6a4 4 0 0 1 4-4zM6.500 14h3v1.500h-3z" fill="#5c616b"/></svg>
<div class="t" style="left:1499px;top:1016px;color:#848890">4.5.stable</div>
<svg class="i" style="left:1577px;top:1018px"><use href="#pin"/></svg>
<svg class="i" style="left:1609px;top:1018px"><use href="#ups"/></svg>
<svg class="i" style="left:1577px;top:800px"><use href="#clean"/></svg>
<svg class="i" style="left:1609px;top:800px"><use href="#copy"/></svg>
<div class="b" style="left:1570px;top:826px;width:62px;height:1px;background:#4a505c"></div>
<svg class="i" style="left:1577px;top:838px"><use href="#lines"/></svg>
<div class="b" style="left:1603px;top:833px;width:28px;height:26px;background:#21262e;border-radius:2px"></div>
<svg class="i" style="left:1609px;top:838px;color:#63adf2"><use href="#mag"/></svg>
<div class="b" style="left:1570px;top:864px;width:62px;height:1px;background:#4a505c"></div>
<div class="fb" style="top:871px"></div><svg class="i" style="left:1577px;top:878px"><use href="#msg"/></svg><div class="t blue" style="left:1606px;top:876px">3</div>
<div class="fb" style="top:906px"></div><svg class="i" style="left:1577px;top:913px"><use href="#err"/></svg><div class="t blue" style="left:1606px;top:911px">0</div>
<div class="fb" style="top:941px"></div><svg class="i" style="left:1577px;top:948px"><use href="#warn"/></svg><div class="t blue" style="left:1606px;top:946px">0</div>
<div class="fb" style="top:976px"></div><svg class="i" style="left:1577px;top:983px"><use href="#pen"/></svg><div class="t blue" style="left:1606px;top:981px">2</div>

<!-- RIGHT DOCK -->
<div class="b" style="left:1639px;top:0;width:269px;height:29px;background:#252b35"></div>
<div class="b" style="left:1639px;top:1px;width:85px;height:28px;background:#363d4a;border-top:2px solid #5b97d4;box-sizing:border-box"></div>
<div class="t" style="left:1650px;top:5px">Inspector</div>
<div class="t dim" style="left:1735px;top:5px">Node</div>
<div class="t dim" style="left:1793px;top:5px">History</div>
<svg class="i" style="left:1893px;top:7px;color:#7e838c"><use href="#dots"/></svg>
<div class="b" style="left:1639px;top:29px;width:269px;height:1017px;background:#363d4a"></div>
<svg class="i" style="left:1649px;top:40px"><use href="#file"/></svg>
<svg class="i" style="left:1681px;top:40px"><use href="#open"/></svg>
<svg class="i" style="left:1713px;top:40px;color:#7e838c"><use href="#save"/></svg>
<svg class="i" style="left:1745px;top:40px;color:#e0e0e0"><use href="#dots"/></svg>
<svg class="i" style="left:1831px;top:40px;color:#e0e0e0"><use href="#bl"/></svg>
<svg class="i" style="left:1855px;top:40px;color:#7e838c"><use href="#br"/></svg>
<svg class="i" style="left:1883px;top:40px"><use href="#hist"/></svg>
<div class="b" style="left:1643px;top:65px;width:230px;height:31px;background:#252b35;border-radius:2px"></div>
<svg class="i" style="left:1647px;top:72px;color:#fc7f7f"><use href="#ring"/></svg>
<div class="t" style="left:1671px;top:70px">World</div>
<svg class="i" style="left:1853px;top:72px;color:#d8d8d8"><use href="#chd"/></svg>
<svg class="i" style="left:1883px;top:72px"><use href="#doc"/></svg>
<div class="b" style="left:1643px;top:100px;width:230px;height:31px;background:#252b35;border-bottom:2px solid #1d2129;box-sizing:border-box;border-radius:2px"></div>
<div class="t ph" style="left:1649px;top:105px">Filter Properties</div>
<svg class="i" style="left:1851px;top:107px;color:#d8d8d8"><use href="#mag"/></svg>
<svg class="i" style="left:1883px;top:107px"><use href="#tools"/></svg>
<div class="b" style="left:1643px;top:135px;width:262px;height:907px;background:#21262e;border-radius:2px"></div>
<div class="hd" style="top:140px;height:25px"></div>
<svg class="i" style="left:1732px;top:145px"><use href="#gear"/></svg>
<div class="t bd" style="left:1754px;top:142px">world.gd</div>
<div class="b" style="left:1649px;top:165px;width:125px;height:31px;background:#38506a"></div>
<div class="b" style="left:1774px;top:165px;width:125px;height:31px;background:#1d2129"></div>
<div class="t" style="left:1657px;top:171px;color:#9aa2ac">Using Sensor</div>
<div class="b" style="left:1781px;top:173px;width:14px;height:14px;background:#63adf2;border-radius:2px"></div>
<svg class="i" style="left:1780px;top:172px"><path d="M4 8l3 3 5-6" stroke="#fff" stroke-width="2" fill="none"/></svg>
<div class="t blue" style="left:1804px;top:170px">On</div>
<div class="hd" style="top:196px;height:25px"></div>
<svg class="i" style="left:1735px;top:201px;color:#fc7f7f"><use href="#ring"/></svg>
<div class="t bd" style="left:1757px;top:198px">Node3D</div>
<div class="sec" style="top:221px;height:25px"></div>
<svg class="i" style="left:1649px;top:226px;color:#7d8087"><use href="#chd"/></svg>
<div class="t bd" style="left:1665px;top:223px">Transform</div>
<div class="t lab" style="left:1669px;top:249px">Position</div>
<div class="b" style="left:1661px;top:275px;width:238px;height:31px;background:#252b35"></div>
<div class="ax" style="left:1661px;top:275px"></div><div class="ax" style="left:1741px;top:275px"></div><div class="ax" style="left:1822px;top:275px"></div>
<div class="t" style="left:1667px;top:281px;color:#8a6a5c">x</div><div class="t" style="left:1685px;top:281px">0.0</div><div class="t" style="left:1711px;top:281px;color:#6d7178">m</div>
<div class="t" style="left:1747px;top:281px;color:#4f8a5c">y</div><div class="t" style="left:1765px;top:281px">0.0</div><div class="t" style="left:1791px;top:281px;color:#6d7178">m</div>
<div class="t" style="left:1828px;top:281px;color:#5f4f99">z</div><div class="t" style="left:1845px;top:281px">0.0</div><div class="t" style="left:1871px;top:281px;color:#6d7178">m</div>
<div class="t lab" style="left:1669px;top:313px">Rotation</div>
<div class="b" style="left:1661px;top:339px;width:238px;height:31px;background:#252b35"></div>
<div class="ax" style="left:1661px;top:339px"></div><div class="ax" style="left:1741px;top:339px"></div><div class="ax" style="left:1822px;top:339px"></div>
<div class="t" style="left:1667px;top:345px;color:#8a6a5c">x</div><div class="t" style="left:1685px;top:345px">0.0</div><div class="t" style="left:1708px;top:343px;color:#8a8e94">°</div>
<div class="t" style="left:1747px;top:345px;color:#4f8a5c">y</div><div class="t" style="left:1765px;top:345px">0.0</div><div class="t" style="left:1788px;top:343px;color:#8a8e94">°</div>
<div class="t" style="left:1828px;top:345px;color:#5f4f99">z</div><div class="t" style="left:1845px;top:345px">0.0</div><div class="t" style="left:1868px;top:343px;color:#8a8e94">°</div>
<div class="sl" style="left:1667px;top:365px;width:60px"></div><div class="sh" style="left:1697px"></div>
<div class="sl" style="left:1747px;top:365px;width:61px"></div><div class="sh" style="left:1777px"></div>
<div class="sl" style="left:1828px;top:365px;width:61px"></div><div class="sh" style="left:1858px"></div>
<div class="t lab" style="left:1669px;top:377px">Scale</div>
<div class="b" style="left:1661px;top:403px;width:238px;height:31px;background:#252b35"></div>
<div class="ax" style="left:1661px;top:403px"></div><div class="ax" style="left:1732px;top:403px"></div><div class="ax" style="left:1803px;top:403px"></div>
<div class="t" style="left:1667px;top:409px;color:#8a6a5c">x</div><div class="t" style="left:1685px;top:409px">1.0</div>
<div class="t" style="left:1738px;top:409px;color:#4f8a5c">y</div><div class="t" style="left:1756px;top:409px">1.0</div>
<div class="t" style="left:1809px;top:409px;color:#5f4f99">z</div><div class="t" style="left:1826px;top:409px">1.0</div>
<svg class="i" style="left:1879px;top:411px;color:#e0e0e0"><use href="#link"/></svg>
<div class="t lab" style="left:1669px;top:444px;letter-spacing:-.2px">Rotation Edit M</div>
<div class="b" style="left:1780px;top:438px;width:119px;height:31px;background:#252b35;border-radius:2px"></div>
<div class="t" style="left:1786px;top:443px">Euler</div>
<svg class="i" style="left:1881px;top:445px;color:#d8d8d8"><use href="#chd"/></svg>
<div class="t lab" style="left:1669px;top:479px;letter-spacing:-.2px">Rotation Order</div>
<div class="b" style="left:1780px;top:473px;width:119px;height:31px;background:#252b35;border-radius:2px"></div>
<div class="t" style="left:1786px;top:478px">YXZ</div>
<svg class="i" style="left:1881px;top:480px;color:#d8d8d8"><use href="#chd"/></svg>
<div class="t lab" style="left:1669px;top:514px">Top Level</div>
<div class="b" style="left:1780px;top:508px;width:119px;height:31px;background:#252b35;border-radius:2px"></div>
<div class="b" style="left:1787px;top:516px;width:14px;height:14px;background:#434a57;border-radius:2px"></div>
<div class="t" style="left:1810px;top:513px">On</div>
<div class="sec" style="top:539px;height:25px"></div>
<svg class="i" style="left:1649px;top:544px;color:#7d8087"><use href="#chr"/></svg>
<div class="t bd" style="left:1665px;top:541px">Visibility</div>
<div class="hd" style="top:564px;height:25px"></div>
<svg class="i" style="left:1744px;top:569px;color:#e0e0e0"><use href="#ring"/></svg>
<div class="t bd" style="left:1766px;top:566px">Node</div>
<div class="sec" style="top:589px;height:100px"></div>
<svg class="i" style="left:1649px;top:594px;color:#7d8087"><use href="#chr"/></svg>
<div class="t bd" style="left:1665px;top:591px">Process</div>
<svg class="i" style="left:1649px;top:619px;color:#7d8087"><use href="#chr"/></svg>
<div class="t bd" style="left:1665px;top:616px">Physics Interpolation</div>
<svg class="i" style="left:1649px;top:644px;color:#7d8087"><use href="#chr"/></svg>
<div class="t bd" style="left:1665px;top:641px">Auto Translate</div>
<svg class="i" style="left:1649px;top:669px;color:#7d8087"><use href="#chr"/></svg>
<div class="t bd" style="left:1665px;top:666px">Editor Description</div>
<div class="t lab" style="left:1657px;top:695px">Script</div>
<svg class="i" style="left:1749px;top:697px"><use href="#reload"/></svg>
<svg class="i" style="left:1780px;top:696px"><use href="#gear"/></svg>
<div class="t" style="left:1804px;top:694px">world.gd</div>
<div class="b" style="left:1873px;top:689px;width:26px;height:31px;background:#252b35;border-radius:2px"></div>
<svg class="i" style="left:1878px;top:697px;color:#b0b0b0"><use href="#chd"/></svg>
<div class="b" style="left:1684px;top:724px;width:179px;height:31px;background:#2c323c;border-radius:2px"></div>
<svg class="i" style="left:1690px;top:731px;color:#e0e0e0"><use href="#plus"/></svg>
<div class="t" style="left:1738px;top:729px">Add Metadata</div>
</div>
<script>
(function(){
var c=document.getElementById('vp');if(!c)return;var g=c.getContext('2d');var W=1355,H=717;
var im=g.createImageData(W,H),d=im.data;
var VL=-40,VR=1284,HY=205;
var P=[[280,253],[548,243.6],[704,236],[815,231.5],[900,232.7],[1100,236.5],[1270,240],[1635,250]];
function top(x){for(var i=0;i<P.length-1;i++){if(x<=P[i+1][0]){var t=(x-P[i][0])/(P[i+1][0]-P[i][0]);return P[i][1]+t*(P[i+1][1]-P[i][1]);}}return 250;}
var tops=[];for(var i=0;i<W;i++){var x0=280+i;var sx=Math.floor(x0/40)*40;tops[i]=Math.round(top(sx));}
function I(t,per,w){var k=Math.floor(t/per),r=t-k*per;return k*w+Math.min(r,w);}
function cov(t,per,h,f){var w=2*h,s=t+h;return (I(s+f/2,per,w)-I(s-f/2,per,w))/f;}
function T(t){var r=t-2*Math.floor(t/2);return 1-Math.abs(r-1);}
function sq(t,f){return (T(t+f/2)-T(t-f/2))/f;}
var sky=[[0,128,197,255],[.5,176,215,255],[.85,214,228,250],[1,232,237,244]];
for(var y=0;y<H;y++){var Y=y+68.5;
 for(var x=0;x<W;x++){var X=x+280.5,o=(y*W+x)*4,R,G,B;
  if(Y<tops[x]){
   var t=(Y-68)/164+Math.pow((X-950)/1000,2)*.12;if(t>1)t=1;
   var k=0;while(k<sky.length-2&&t>sky[k+1][0])k++;
   var a0=sky[k],a1=sky[k+1],u=(t-a0[0])/(a1[0]-a0[0]);
   R=a0[1]+(a1[1]-a0[1])*u;G=a0[2]+(a1[2]-a0[2])*u;B=a0[3]+(a1[3]-a0[3])*u;
  }else{
   var dd=Y-HY,s=580/dd;
   var A=(VL+(X-VL)*s-1065)/83,Bb=(VR-(VR-X)*s-380)/72;
   var ax=s/83,bx=s/72,ay=Math.abs(X-VL)*580/(dd*dd)/83,by=Math.abs(VR-X)*580/(dd*dd)/72;
   var iso=.36*Math.max(Math.sqrt(ax*ax+bx*bx),Math.sqrt(ay*ay+by*by));
   var fa=Math.max(.7*(ax+ay),iso),fb=Math.max(.7*(bx+by),iso);
   var grow=1+Math.max(0,s-2)*.06;
   var wa=Math.max(cov(A,8,.14*grow,fa),cov(A,4,.07*grow,fa));
   var wb=Math.max(cov(Bb,8,.14*grow,fb),cov(Bb,4,.07*grow,fb));
   var wh=1-(1-wa)*(1-wb);
   var m=1-(1-cov(A,1,.035,fa))*(1-cov(Bb,1,.035,fb));
   var l=.5+.5*sq(A,fa)*sq(Bb,fb);
   R=92+20*l;G=106+20*l;B=132+24*l;
   R+=(135-R)*m;G+=(150-G)*m;B+=(185-B)*m;
   R+=(255-R)*wh;G+=(255-G)*wh;B+=(255-B)*wh;
   var fog=Math.min(1,Math.max(0,(s-1.5)/10));
   R+=(141-R)*fog;G+=(153-G)*fog;B+=(181-B)*fog;
  }
  d[o]=R;d[o+1]=G;d[o+2]=B;d[o+3]=255;
 }}
g.putImageData(im,0,0);
})();
</script>
</body></html>
